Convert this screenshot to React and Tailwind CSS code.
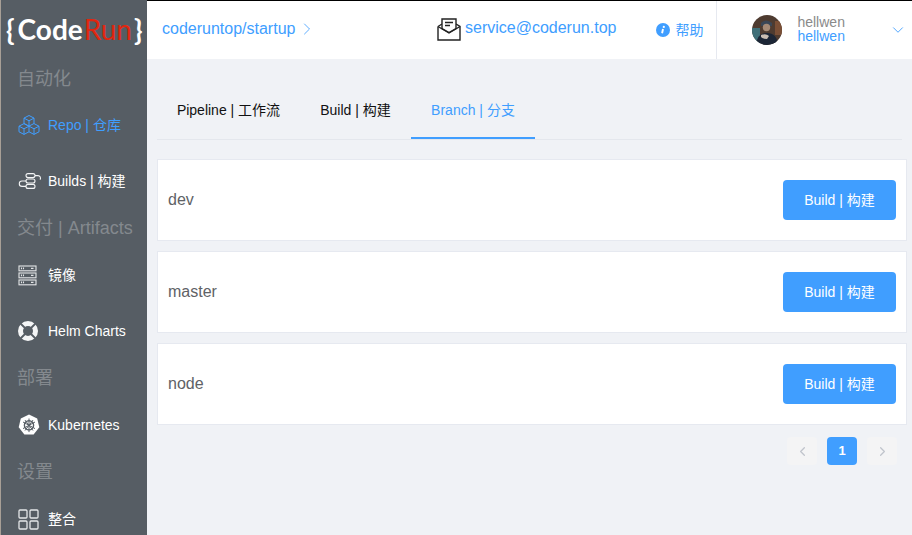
import React from 'react';
import { ChevronRight, ChevronLeft, ChevronDown } from 'lucide-react';

const fontStack = "font-['Liberation_Sans','Noto_Sans_CJK_SC',sans-serif]";

const RepoIcon = () => (
  <svg width="22" height="22" viewBox="0 0 22 22" fill="none" stroke="currentColor" strokeWidth="1" strokeLinejoin="round">
    <path d="M11 1.5l5 2.6v5.4l-5 2.6-5-2.6V4.1z" />
    <path d="M6 4.1l5 2.7 5-2.7M11 6.8v5.3" />
    <path d="M6 9.6l5 2.6v5.6l-5 2.6-5-2.6v-5.6z" />
    <path d="M1 12.2l5 2.6 5-2.600M6 14.800v5.600" />
    <path d="M16 9.600l5 2.600v5.600l-5 2.600-5-2.600" />
    <path d="M11 12.200l5 2.600 5-2.600M16 14.800v5.600" />
  </svg>
);

const BuildsIcon = () => (
  <svg width="24" height="16" viewBox="0 0 24 16" fill="none" stroke="#f4f5f6" strokeWidth="1.100">
    <rect x="8" y="0.600" width="9" height="4" rx="2" />
    <rect x="8" y="6" width="9" height="4" rx="2" />
    <rect x="8" y="11.400" width="9" height="4" rx="2" />
    <path d="M17 2.600h3a2.500 2.500 0 0 1 2 4" />
    <path d="M8 8H4a2.700 2.700 0 0 0 0 5.400h4" />
  </svg>
);

const ImageIcon = () => (
  <svg width="19" height="21" viewBox="0 0 19 21" fill="none" stroke="currentColor" strokeWidth="1.100">
    <rect x="1" y="1" width="17" height="4.800" />
    <rect x="1" y="8" width="17" height="4.800" />
    <rect x="1" y="15" width="17" height="4.800" />
    <path d="M3.500 2.600v1.600M5.500 2.600v1.600M3.500 9.600v1.600M5.500 9.600v1.600M3.500 16.600v1.600M5.500 16.600v1.600M13 3.400h2.500M13 10.400h2.500M13 17.400h2.500" />
  </svg>
);

const HelmIcon = () => (
  <svg width="20" height="20" viewBox="0 0 20 20">
    <path
      fill="#f4f5f6"
      fillRule="evenodd"
      d="M10 0a10 10 0 1 1 0 20a10 10 0 0 1 0-20zM10 5a5 5 0 1 0 0 10a5 5 0 0 0 0-10z"
    />
    <path stroke="#565d64" strokeWidth="1.800" d="M2.500 2.500l4.500 4.500M17.500 2.500l-4.500 4.500M2.500 17.500l4.500-4.500M17.500 17.500l-4.500-4.500" />
  </svg>
);

const KubeIcon = () => (
  <svg width="22" height="22" viewBox="0 0 22 22">
    <path fill="#fff" d="M11 .5l8.200 3.900 2.100 8.900-5.700 7.200H6.400L.7 13.300l2.100-8.900z" />
    <g fill="none" stroke="#565d64" strokeWidth="1">
      <circle cx="11" cy="11.300" r="4.600" strokeWidth="1.400" />
      <path d="M11 4.500v13.600M5 8l12 6.600M17 8L5 14.600M7 16.500l8-10.400M15 16.500L7 6.100" />
    </g>
  </svg>
);

const GridIcon = () => (
  <svg width="21" height="21" viewBox="0 0 21 21" fill="none" stroke="currentColor" strokeWidth="1.300">
    <rect x="1" y="1" width="8" height="8" rx="1" />
    <rect x="12" y="1" width="8" height="8" rx="1" />
    <rect x="1" y="12" width="8" height="8" rx="1" />
    <rect x="12" y="12" width="8" height="8" rx="1" />
  </svg>
);

const MailIcon = () => (
  <svg width="24" height="23" viewBox="0 0 24 23" fill="none" stroke="#222" strokeWidth="1.400">
    <path d="M1 8.500v13.500h22V8.500l-4-2.500M1 8.500l4-2.500" />
    <path fill="#fff" d="M5 10.500V1h14v9.500l-7 4z" />
    <path d="M1 8.500l11 6.500 11-6.500" />
    <path d="M8 4.500h8M8 7.500h5" />
  </svg>
);

const InfoDot = () => (
  <svg width="14" height="14" viewBox="0 0 14 14">
    <circle cx="7" cy="7" r="7" fill="#409eff" />
    <circle cx="7.800" cy="3.900" r="1.100" fill="#fff" />
    <path d="M7 6l-.9 4.300" stroke="#fff" strokeWidth="1.900" />
  </svg>
);

const Avatar = () => (
  <svg width="30" height="30" viewBox="0 0 30 30" className="rounded-full">
    <rect width="30" height="30" fill="#4e3b30" />
    <rect x="0" y="13" width="8" height="17" fill="#3f6f78" />
    <rect x="23" y="6" width="7" height="14" fill="#7a4f36" />
    <path d="M9 8q5-5 11 0v3H9z" fill="#3a4656" />
    <circle cx="14.500" cy="12.500" r="3.700" fill="#a58a76" />
    <path d="M4 30q1-12 11-12t11 12z" fill="#1c2636" />
    <path d="M9 20q5-2 8 1l-2 3q-4 0-6-2z" fill="#c9bdb2" />
  </svg>
);

const SectionTitle = ({ children, className }) => (
  <div className={`h-[32px] pl-4 flex items-center text-lg text-[#84898e] whitespace-nowrap ${className}`}>{children}</div>
);

const NavItem = ({ icon: Icon, label, active, className }) => (
  <div className={`h-[40px] pl-[17px] flex items-center text-sm ${active ? 'text-[#409eff]' : 'text-white'} ${className}`}>
    <span className={`w-[30px] flex items-center ${active ? 'text-[#409eff]' : 'text-[#e4e6e8]'}`}>
      <Icon />
    </span>
    <span>{label}</span>
  </div>
);

const Sidebar = () => (
  <aside className="w-[147px] h-[535px] shrink-0 overflow-hidden bg-[#565d64] border-l border-l-[#a89f96]">
    <div className="h-[63px] pl-[5px] pt-[11px] text-[28px] leading-[36px] whitespace-nowrap font-['Lato',sans-serif] flex">
      <span className="text-white font-bold mr-[3px]">{'{'}</span>
      <span className="text-white font-bold mr-[1px]">Code</span>
      <span className="text-[#e1260f] mr-[2px]">Run</span>
      <span className="text-white font-bold">{'}'}</span>
    </div>
    <SectionTitle>自动化</SectionTitle>
    <NavItem icon={RepoIcon} label="Repo | 仓库" active className="mt-[10px]" />
    <NavItem icon={BuildsIcon} label="Builds | 构建" className="mt-[16px]" />
    <SectionTitle className="mt-[11px]">交付 | Artifacts</SectionTitle>
    <NavItem icon={ImageIcon} label="镜像" className="mt-[11px]" />
    <NavItem icon={HelmIcon} label="Helm Charts" className="mt-[16px]" />
    <SectionTitle className="mt-[11px]">部署</SectionTitle>
    <NavItem icon={KubeIcon} label="Kubernetes" className="mt-[11px]" />
    <SectionTitle className="mt-[11px]">设置</SectionTitle>
    <NavItem icon={GridIcon} label="整合" className="mt-[11px]" />
  </aside>
);

const Header = () => (
  <header className="h-[59px] shrink-0 bg-white border-t border-t-black flex items-center">
    <div className="w-[275px] pl-[15px] flex items-center text-base text-[#409eff] -mt-[3px]">
      <span>coderuntop/startup</span>
      <ChevronRight size={20} strokeWidth={1} className="ml-[2px]" />
    </div>
    <div className="w-[15px]" />
    <div className="flex items-center text-base text-[#409eff] -mt-[1px]">
      <MailIcon />
      <span className="ml-[4px] -mt-[3px]">service@coderun.top</span>
    </div>
    <div className="ml-[40px] flex items-center text-sm text-[#409eff] -mt-[1px]">
      <InfoDot />
      <span className="ml-[5px]">帮助</span>
    </div>
    <div className="ml-[13px] h-[58px] flex-1 border-l border-l-[#e6e9f0] flex items-center pl-[35px]">
      <Avatar />
      <div className="ml-[15px] text-sm leading-[14px] -mt-[3px]">
        <div className="text-[#8a8a8a]">hellwen</div>
        <div className="text-[#409eff]">hellwen</div>
      </div>
      <ChevronDown size={18} strokeWidth={1.200} className="ml-[44px] -mt-[1px] text-[#409eff]" />
    </div>
  </header>
);

const Tabs = () => (
  <div className="mt-[21px] mx-[10px] flex border-b border-b-[#e4e7ed] text-sm">
    <div className="h-[59px] w-[143px] flex items-center justify-center text-[#111]">Pipeline | 工作流</div>
    <div className="h-[59px] w-[111px] flex items-center justify-center text-[#111]">Build | 构建</div>
    <div className="h-[59px] w-[124px] flex items-center justify-center text-[#409eff] shadow-[inset_0_-2px_0_#409eff]">Branch | 分支</div>
  </div>
);

const BranchRow = ({ name }) => (
  <div className="h-[82px] bg-white border border-[#e6e9f0] flex items-center justify-between pl-[10px] pr-[10px]">
    <span className="text-base text-[#606266]">{name}</span>
    <button className="w-[113px] h-[40px] rounded bg-[#409eff] text-white text-sm">Build | 构建</button>
  </div>
);

const Pagination = () => (
  <div className="mt-[12px] pr-[15px] flex justify-end gap-[10px] text-[13px]">
    <span className="w-[30px] h-[28px] rounded-sm bg-[#f4f4f5] text-[#c0c4cc] flex items-center justify-center">
      <ChevronLeft size={15} />
    </span>
    <span className="w-[30px] h-[28px] rounded-sm bg-[#409eff] text-white font-bold flex items-center justify-center">1</span>
    <span className="w-[30px] h-[28px] rounded-sm bg-[#f4f4f5] text-[#c0c4cc] flex items-center justify-center">
      <ChevronRight size={15} />
    </span>
  </div>
);

export default function App() {
  const branches = ['dev', 'master', 'node'];

  return (
    <div className={`w-[912px] h-[535px] overflow-hidden flex bg-[#f0f2f6] ${fontStack}`}>
      <Sidebar />
      <div className="flex-1 flex flex-col">
        <Header />
        <Tabs />
        <div className="mt-[19px] pl-[10px] pr-[5px] flex flex-col gap-[10px]">
          {branches.map((b) => (
            <BranchRow key={b} name={b} />
          ))}
        </div>
        <Pagination />
      </div>
    </div>
  );
}
